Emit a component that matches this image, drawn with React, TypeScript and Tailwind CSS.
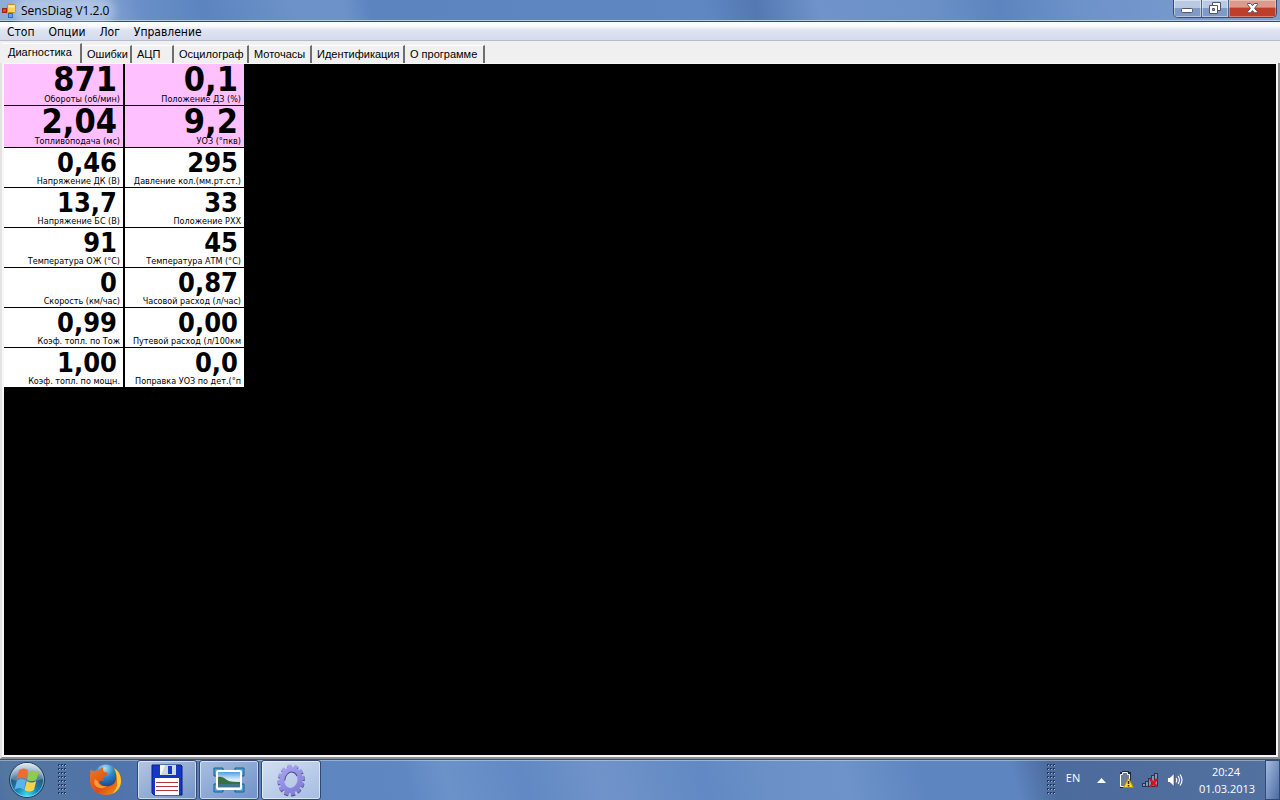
import { useState } from 'react';
import clsx from 'clsx';

type Reading = {
  value: string;
  label: string;
  accent?: boolean;
};

const readings: Reading[] = [
  { value: '871', label: 'Обороты (об/мин)', accent: true },
  { value: '0,1', label: 'Положение ДЗ (%)', accent: true },
  { value: '2,04', label: 'Топливоподача (мс)', accent: true },
  { value: '9,2', label: 'УОЗ (°пкв)', accent: true },
  { value: '0,46', label: 'Напряжение ДК (В)' },
  { value: '295', label: 'Давление кол.(мм.рт.ст.)' },
  { value: '13,7', label: 'Напряжение БС (В)' },
  { value: '33', label: 'Положение РХХ' },
  { value: '91', label: 'Температура ОЖ (°С)' },
  { value: '45', label: 'Температура АТМ (°С)' },
  { value: '0', label: 'Скорость (км/час)' },
  { value: '0,87', label: 'Часовой расход (л/час)' },
  { value: '0,99', label: 'Коэф. топл. по Тож' },
  { value: '0,00', label: 'Путевой расход (л/100км' },
  { value: '1,00', label: 'Коэф. топл. по мощн.' },
  { value: '0,0', label: 'Поправка УОЗ по дет.(°п' },
];

const tabs = [
  { name: 'Диагностика', width: 'w-20' },
  { name: 'Ошибки', width: 'w-[50px]' },
  { name: 'АЦП', width: 'w-[42px]' },
  { name: 'Осцилограф', width: 'w-[75px]' },
  { name: 'Моточасы', width: 'w-[63px]' },
  { name: 'Идентификация', width: 'w-[93px]' },
  { name: 'О программе', width: 'w-20' },
];

const menu = ['Стоп', 'Опции', 'Лог', 'Управление'];

function AppIcon() {
  return (
    <svg width="14" height="14" viewBox="0 0 14 14" aria-hidden="true">
      <rect x="5.5" y="0.5" width="8" height="8" rx="1" fill="#f7cf4e" stroke="#b98a1c" />
      <rect x="6.5" y="1.5" width="6" height="2" fill="#fdeaa0" />
      <rect x="0.5" y="4.5" width="4" height="4" fill="#d8432f" stroke="#9c2517" />
      <rect x="6.5" y="9.5" width="4" height="4" fill="#5f9df0" stroke="#2d66bb" />
    </svg>
  );
}

function TitleBar() {
  return (
    <header className="flex h-[22px] items-start border-b border-[#37496b] bg-[linear-gradient(80deg,#8fadd9_0%,#8fadd9_7%,#6b8fc8_11%,#6189c2_14%,#5c84bf_16%,#6d92c9_23%,#6d92c9_27%,#5c84bf_29%,#5f88c2_55%,#5478b2_59%,#6f93ca_64%,#6b90c8_73%,#5d84be_78%,#6d92ca_84%,#7f9fd0_100%)] shadow-[inset_0_-1px_0_#b5c9e6]">
      <div className="flex h-[21px] flex-1 items-center gap-[5px] pl-[2px]">
        <AppIcon />
        <h1 className="rounded-full bg-white/30 font-['Open_Sans',sans-serif] text-xs leading-4 text-black shadow-[0_0_8px_6px_rgba(255,255,255,0.3)]">
          SensDiag V1.2.0
        </h1>
      </div>
      <div className="mr-[3px] flex h-[18px] overflow-hidden rounded-b-[5px] border border-t-0 border-[#3a4a6b]">
        <button
          type="button"
          aria-label="Свернуть"
          className="flex w-7 items-center justify-center border-r border-[#4d6288] bg-linear-to-b from-[#b9c9e2] from-45% to-[#7f9ac4] to-50% shadow-[inset_0_0_0_1px_rgba(255,255,255,0.45)]"
        >
          <svg width="13" height="13" viewBox="0 0 13 13">
            <rect x="0.5" y="6.5" width="11" height="4" rx="1" fill="#fff" stroke="#535666" />
          </svg>
        </button>
        <button
          type="button"
          aria-label="Восстановить"
          className="flex w-[27px] items-center justify-center border-r border-[#4d6288] bg-linear-to-b from-[#b9c9e2] from-45% to-[#7f9ac4] to-50% shadow-[inset_0_0_0_1px_rgba(255,255,255,0.45)]"
        >
          <svg width="13" height="13" viewBox="0 0 13 13" fill="none">
            <path d="M3.5 0.5h8v8h-8z" fill="#fff" stroke="#535666" />
            <path d="M0.5 3.5h8v8h-8z" fill="#fff" stroke="#535666" />
            <path d="M3.5 6.500h2v2h-2z" fill="#8aa2c8" stroke="#535666" />
          </svg>
        </button>
        <button
          type="button"
          aria-label="Закрыть"
          className="flex w-[47px] items-center justify-center bg-linear-to-b from-[#dc9a8d] from-40% to-[#c03d2a] to-50% shadow-[inset_0_0_0_1px_rgba(255,255,255,0.35)]"
        >
          <svg width="13" height="13" viewBox="0 0 13 13">
            <path
              d="M1.5 1.500h3.200l1.800 2.200L8.300 1.500h3.200v1L8.600 6.300l2.900 3.500v1H8.300L6.500 8.600l-1.800 2.200H1.500v-1l2.900-3.500L1.500 2.500z"
              fill="#fff"
              stroke="#535666"
            />
          </svg>
        </button>
      </div>
    </header>
  );
}

function MenuBar() {
  return (
    <nav className="flex h-[19px] items-center gap-[14px] border-b border-[#b6bccc] bg-linear-to-b from-[#fbfcfe] from-20% via-[#dfe4f2] via-45% to-[#d5dbed] pl-[7px] pt-px text-xs leading-4">
      {menu.map((item) => (
        <button key={item} type="button">
          {item}
        </button>
      ))}
    </nav>
  );
}

function ReadingCell({ value, label, accent }: Reading) {
  return (
    <div
      className={clsx(
        'flex flex-col items-end whitespace-nowrap',
        accent ? 'h-[41px] bg-[#ffc0ff]' : 'h-[39px] bg-white'
      )}
    >
      <dd
        className={clsx(
          'pr-[6px] font-bold',
          accent ? 'text-[34px] leading-[31px]' : 'text-[27px] leading-[29px]'
        )}
      >
        {value}
      </dd>
      <dt className="pr-[3px] text-[9px] leading-[8px]">{label}</dt>
    </div>
  );
}

function StartOrb() {
  return (
    <svg width="38" height="38" viewBox="0 0 38 38" aria-hidden="true">
      <defs>
        <radialGradient id="orb" cx="50%" cy="95%" r="90%">
          <stop offset="0" stopColor="#3fe0f5" />
          <stop offset="0.35" stopColor="#1486b5" />
          <stop offset="0.7" stopColor="#27587f" />
          <stop offset="1" stopColor="#8aa8c2" />
        </radialGradient>
        <linearGradient id="orbGloss" x1="0" y1="0" x2="0" y2="1">
          <stop offset="0" stopColor="#fff" stopOpacity="0.7" />
          <stop offset="1" stopColor="#fff" stopOpacity="0.15" />
        </linearGradient>
      </defs>
      <circle cx="19" cy="19" r="17.5" fill="url(#orb)" stroke="#1f3c5e" />
      <circle cx="19" cy="19" r="16.5" fill="none" stroke="#b9d9ea" strokeOpacity="0.6" />
      <path d="M3 18a16 16 0 0 1 32 0c-8 3-23 4-32 0z" fill="url(#orbGloss)" />
      <path d="M11 9c3-2 6-2 9 0l-2 9c-3-2-6-2-9.500 0z" fill="#ef6b34" />
      <path d="M21 9.500c3 2 6 2 10 0l-2.500 9c-3 2-6 2-9.500 0z" fill="#92c950" />
      <path d="M9 19.500c3-2 6-2 9 0l-2 9c-3-2-6-2-9.500 0z" fill="#5bb4ee" />
      <path d="M18.700 20c3 2 6 2 9.500 0l-2.200 9c-3 2-6 2-9.500 0z" fill="#fdd046" />
    </svg>
  );
}

function Grip() {
  return (
    <svg width="10" height="32" viewBox="0 0 10 32" aria-hidden="true">
      <defs>
        <pattern id="grip" width="3" height="4" patternUnits="userSpaceOnUse">
          <rect width="2" height="2" fill="#22375f" />
          <rect x="1" y="1" width="1" height="1" fill="#a3b9da" />
        </pattern>
      </defs>
      <rect width="9" height="32" fill="url(#grip)" />
    </svg>
  );
}

function FirefoxIcon() {
  return (
    <svg width="34" height="34" viewBox="0 0 34 34" aria-hidden="true">
      <defs>
        <radialGradient id="globe" cx="45%" cy="15%" r="80%">
          <stop offset="0" stopColor="#a9e2f7" />
          <stop offset="0.45" stopColor="#2f86c9" />
          <stop offset="1" stopColor="#163a7d" />
        </radialGradient>
        <linearGradient id="fox" x1="0" y1="0" x2="1" y2="1">
          <stop offset="0" stopColor="#ee7a24" />
          <stop offset="0.55" stopColor="#dd4f12" />
          <stop offset="1" stopColor="#f39a1c" />
        </linearGradient>
      </defs>
      <circle cx="18" cy="14" r="12.5" fill="url(#globe)" />
      <path
        d="M3 6c1 2 2 2 3 2 2-1 4-1 5 0 0-2 2-3 4-4 0 2 0 4 1 5 3 0 4 1 4 2-1 2-4 2-5 4l1 3c-2-1-4 0-5 1 2 4 7 5 10 4 5-1 8-5 7-11 0-3-1-5-2-7 5 3 7 8 7 13 0 8-7 14-15 14C9 32 2 26 2 17 2 12 2 9 3 6z"
        fill="url(#fox)"
      />
      <path d="M26 5c5 3 7 8 7 13 0 6-4 11-9 13 4-4 6-8 5-13 0-5-1-9-3-13z" fill="#fbc934" />
      <path d="M10 18c0 4 5 6 9 5-3 3-9 3-12-1-1-2-1-4 0-6 1 1 2 2 3 2z" fill="#f79c33" />
    </svg>
  );
}

function FloppyIcon() {
  return (
    <svg width="32" height="32" viewBox="0 0 32 32" aria-hidden="true">
      <path d="M1 1h29l1 1v29H3l-2-2z" fill="#1537c8" stroke="#0b1d80" />
      <rect x="9" y="1" width="16" height="10" fill="#d3d6dd" />
      <path d="M9 1h5l-4 10H9z" fill="#f7f8fb" />
      <rect x="17" y="2" width="4" height="8" fill="#1537c8" />
      <rect x="4" y="14" width="24" height="17" fill="#fff" />
      <path d="M5 18.500h22M5 22.500h22M5 26.500h22" stroke="#b0373f" strokeWidth="1" />
    </svg>
  );
}

function PictureIcon() {
  return (
    <svg width="32" height="28" viewBox="0 0 32 28" aria-hidden="true">
      <defs>
        <linearGradient id="sky" x1="0" y1="0" x2="0" y2="1">
          <stop offset="0" stopColor="#3b93dc" />
          <stop offset="0.5" stopColor="#e2f3fb" />
          <stop offset="1" stopColor="#4a8fb5" />
        </linearGradient>
      </defs>
      <path d="M1 10V2h9v4H6v4zM31 10V2h-9v4h4v4zM1 18v8h9v-4H6v-4zM31 18v8h-9v-4h4v-4z" fill="#4fa3d4" stroke="#17608f" />
      <rect x="4" y="5" width="24" height="18" rx="1" fill="url(#sky)" stroke="#fff" strokeWidth="2" />
      <path d="M5 11c4-1 6 1 9 3s8 2 13 2v3H5z" fill="#37713f" />
      <path d="M5 18h22v4H5z" fill="#41758f" />
      <path d="M5 21h22v1H5z" fill="#9fc9da" />
    </svg>
  );
}

function GearIcon() {
  return (
    <svg width="32" height="34" viewBox="0 0 32 34" fill="none" aria-hidden="true">
      <defs>
        <linearGradient id="gear" gradientUnits="userSpaceOnUse" x1="4" y1="4" x2="28" y2="30">
          <stop offset="0" stopColor="#a9a6f5" />
          <stop offset="1" stopColor="#7d78d2" />
        </linearGradient>
      </defs>
      <g transform="rotate(12 16 17)">
        <ellipse cx="16.500" cy="18" rx="11.500" ry="13.500" stroke="#565681" strokeWidth="4" pathLength="120" strokeDasharray="6 4" />
        <ellipse cx="16" cy="17" rx="11.500" ry="13.500" stroke="url(#gear)" strokeWidth="4" pathLength="120" strokeDasharray="6 4" />
        <ellipse cx="16" cy="17" rx="9" ry="10.500" stroke="url(#gear)" strokeWidth="5" />
        <path d="M10 19c-1-5 2-10 6-10 2 0 4 1 5 3" stroke="#4f4d80" strokeWidth="1" />
      </g>
    </svg>
  );
}

function Tray() {
  return (
    <div className="flex items-center font-['Open_Sans',sans-serif] text-[11px] leading-4 text-white">
      <Grip />
      <button type="button" className="ml-2 w-4 pb-1 text-center">
        EN
      </button>
      <button type="button" aria-label="Показать скрытые значки" className="ml-4">
        <svg width="9" height="5" viewBox="0 0 9 5">
          <path d="M4.500 0L9 5H0z" fill="#fff" />
        </svg>
      </button>
      <svg width="16" height="18" viewBox="0 0 16 18" className="ml-3" aria-hidden="true">
        <path d="M3.500 2.500h2v-1h4v1h2v13h-8z" fill="#4a5f80" stroke="#1c2740" strokeWidth="3" />
        <path d="M2.500 3.500h2v-2h5v2h2v12h-9z" fill="#6d7f97" stroke="#fff" />
        <path d="M10.500 7l5 9.500h-10z" fill="#fcd92a" stroke="#b8860b" />
        <path d="M10.500 10v3M10.500 14v1.500" stroke="#222" strokeWidth="1.500" />
      </svg>
      <svg width="17" height="16" viewBox="0 0 17 16" className="ml-2" aria-hidden="true">
        <g fill="#8496b4" stroke="#26344f">
          <rect x="0.500" y="11.500" width="3" height="3" />
          <rect x="3.500" y="9.500" width="3" height="5" />
          <rect x="6.500" y="6.500" width="3" height="8" />
          <rect x="9.500" y="3.500" width="3" height="11" />
          <rect x="12.500" y="1.500" width="3" height="13" />
        </g>
        <path d="M8 7l7 8M15 7l-7 8" stroke="#d5141d" strokeWidth="2.500" />
      </svg>
      <svg width="16" height="16" viewBox="0 0 16 16" className="ml-2" aria-hidden="true">
        <path d="M0.500 5.500h2.500l4-4v13l-4-4H0.500z" fill="#fff" stroke="#32425f" strokeWidth="0.600" />
        <path d="M9 6q1.500 2 0 4.500M11 4q3 4 0 8M13 2.500q4 5.500 0 11" fill="none" stroke="#fff" strokeWidth="1.200" />
      </svg>
      <div className="ml-4 w-[58px] whitespace-nowrap pr-1 text-center leading-[17px]">
        <p>20:24</p>
        <p>01.03.2013</p>
      </div>
      <button
        type="button"
        aria-label="Свернуть все окна"
        className="ml-2 h-10 w-[15px] border border-[#2f4a78] bg-linear-to-br from-[#a5bbdd] to-[#4c6ca3]"
      />
    </div>
  );
}

function Taskbar() {
  const windowButton =
    'flex h-10 w-[60px] items-center justify-center rounded-[3px] border border-[#34486f] shadow-[inset_0_0_0_1px_rgba(255,255,255,0.55)]';

  return (
    <footer className="flex h-[41px] items-center justify-between border-t border-[#3b4c6c] bg-[linear-gradient(75deg,#4d70a6_0%,#54779f_1%,#4f73aa_9%,#5c84be_20%,#5f88c2_32%,#6c92ca_35%,#6289c3_41%,#7093ca_47%,#6289c3_55%,#6b90c8_60%,#6e93ca_66%,#5d85bf_72%,#5d85bf_79%,#4c6b9d_82%,#52719f_100%)] shadow-[inset_0_1px_0_rgba(255,255,255,0.35)]">
      <div className="flex items-center">
        <button type="button" aria-label="Пуск" className="ml-2">
          <StartOrb />
        </button>
        <div className="ml-3">
          <Grip />
        </div>
        <button type="button" aria-label="Firefox" className="ml-5">
          <FirefoxIcon />
        </button>
        <div className="ml-[15px] flex gap-[2px]">
          <button type="button" aria-label="Сохранение" className={clsx(windowButton, 'bg-linear-to-br from-[#b5c6e2] to-[#7394c8]')}>
            <FloppyIcon />
          </button>
          <button type="button" aria-label="Изображения" className={clsx(windowButton, 'bg-linear-to-br from-[#a9bfe1] to-[#6f92c9]')}>
            <PictureIcon />
          </button>
          <button type="button" aria-label="SensDiag" className={clsx(windowButton, 'bg-linear-to-br from-[#d3dff1] to-[#a5bde2]')}>
            <GearIcon />
          </button>
        </div>
      </div>
      <Tray />
    </footer>
  );
}

export default function App() {
  const [active, setActive] = useState('Диагностика');

  return (
    <div className="flex min-h-screen flex-col bg-[#f0f0f0] font-['DejaVu_Sans_Condensed','DejaVu_Sans',sans-serif] text-black">
      <TitleBar />
      <MenuBar />

      <div role="tablist" className="flex h-[22px] items-end pl-[2px] font-['Liberation_Sans',sans-serif] text-[11px] leading-4">
        {tabs.map(({ name, width }) => (
          <button
            key={name}
            type="button"
            role="tab"
            aria-selected={active === name}
            onClick={() => setActive(name)}
            className={clsx(
              'whitespace-nowrap border-t border-t-white border-r-2 border-r-[#6e6e6e] text-left',
              width,
              active === name ? 'h-5 pb-1 pl-[6px]' : 'h-[18px] pb-[2px] pl-[5px]'
            )}
          >
            {name}
          </button>
        ))}
      </div>

      <main className="flex flex-1 flex-col border-2 border-t-0 border-[#e3e3e3] border-r-[#8c8c8c] border-b-[#8c8c8c]">
        <div className="flex flex-1 border-2 border-t-1 border-[#f7f7f7] bg-black">
          <dl className="grid grid-cols-[119px_119px] content-start gap-x-[2px] gap-y-px">
            {readings.map((reading) => (
              <ReadingCell key={reading.label} {...reading} />
            ))}
          </dl>
        </div>
      </main>

      <Taskbar />
    </div>
  );
}
